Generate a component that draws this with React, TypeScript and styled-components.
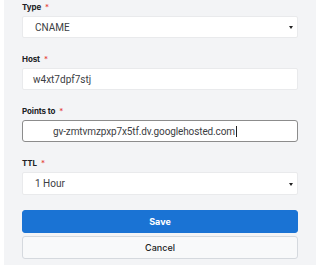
import React from "react";
import styled, { createGlobalStyle } from "styled-components";

const Global = createGlobalStyle`
  html, body { margin: 0; padding: 0; background: #ffffff; }
  body { font-family: Roboto, "Noto Sans", Arial, sans-serif; }
`;

const Panel = styled.div`
  margin-left: 4px;
  width: 312px;
  height: 265px;
  box-sizing: border-box;
  background: #f3f4f6;
  padding: 2px 18px 0 18px;
  display: flex;
  flex-direction: column;
`;

const Fields = styled.div`
  display: flex;
  flex-direction: column;
  gap: 16px;
`;

const Field = styled.div`
  display: flex;
  flex-direction: column;
  gap: 4px;
`;

const Label = styled.div`
  font-family: Inter, Roboto, Arial, sans-serif;
  font-size: 8px;
  font-weight: 700;
  line-height: 10px;
  color: #202124;
  letter-spacing: -0.1px;
`;

const Req = styled.span`
  color: #e53935;
  margin-left: 4px;
  font-weight: 400;
`;

const Box = styled.div<{ $focused?: boolean; $indent?: number; $h?: number }>`
  position: relative;
  box-sizing: border-box;
  height: ${(p) => p.$h ?? 22}px;
  background: #ffffff;
  border: 1px solid ${(p) => (p.$focused ? "#8c8c8c" : "#e9eaec")};
  border-radius: ${(p) => (p.$focused ? 3 : 2)}px;
  padding-left: ${(p) => p.$indent ?? 11}px;
  display: flex;
  align-items: center;
  font-size: 10px;
  letter-spacing: ${(p) => (p.$focused ? "-0.12px" : "0")};
  color: #3c4043;
  font-family: Roboto, Arial, sans-serif;
`;

const Arrow = styled.span`
  position: absolute;
  right: 4px;
  top: 50%;
  margin-top: -1px;
  width: 0;
  height: 0;
  border-left: 2.5px solid transparent;
  border-right: 2.5px solid transparent;
  border-top: 3.5px solid #222;
`;

const Caret = styled.span`
  display: inline-block;
  width: 1px;
  height: 11px;
  background: #222;
  margin-left: 1px;
`;

const Buttons = styled.div`
  margin-top: 15px;
  display: flex;
  flex-direction: column;
  gap: 3px;
`;

const Button = styled.button<{ $primary?: boolean }>`
  box-sizing: border-box;
  height: 23px;
  width: 100%;
  border-radius: 3px;
  border: 1px solid ${(p) => (p.$primary ? "#1a73d4" : "#d5d9de")};
  background: ${(p) => (p.$primary ? "#1a73d4" : "#f8f9fa")};
  color: ${(p) => (p.$primary ? "#ffffff" : "#202124")};
  font-family: Inter, Roboto, Arial, sans-serif;
  font-size: 9px;
  font-weight: ${(p) => (p.$primary ? 700 : 500)};
  padding: 0;
  cursor: pointer;
`;

export default function App() {
  return (
    <>
      <Global />
      <Panel>
        <Fields>
          <Field>
            <Label>
              Type<Req>*</Req>
            </Label>
            <Box $indent={12}>
              CNAME
              <Arrow />
            </Box>
          </Field>
          <Field>
            <Label>
              Host<Req>*</Req>
            </Label>
            <Box $indent={10}>w4xt7dpf7stj</Box>
          </Field>
          <Field>
            <Label>
              Points to<Req>*</Req>
            </Label>
            <Box $focused $indent={30}>
              gv-zmtvmzpxp7x5tf.dv.googlehosted.com
              <Caret />
            </Box>
          </Field>
          <Field>
            <Label>
              TTL<Req>*</Req>
            </Label>
            <Box $indent={12} $h={23}>
              1 Hour
              <Arrow />
            </Box>
          </Field>
        </Fields>
        <Buttons>
          <Button $primary>Save</Button>
          <Button>Cancel</Button>
        </Buttons>
      </Panel>
    </>
  );
}
